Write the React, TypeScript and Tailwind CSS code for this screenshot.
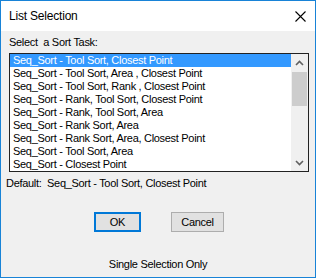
const items = [
  "Seq_Sort - Tool Sort, Closest Point",
  "Seq_Sort - Tool Sort, Area , Closest Point",
  "Seq_Sort - Tool Sort, Rank , Closest Point",
  "Seq_Sort - Rank, Tool Sort, Closest Point",
  "Seq_Sort - Rank, Tool Sort, Area",
  "Seq_Sort - Rank Sort, Area",
  "Seq_Sort - Rank Sort, Area, Closest Point",
  "Seq_Sort - Tool Sort, Area",
  "Seq_Sort - Closest Point",
];

function Chevron({ up }: { up?: boolean }) {
  return (
    <svg width="9" height="6" viewBox="0 0 9 6">
      <polyline
        points={up ? "1,5 4.5,1.5 8,5" : "1,1 4.5,4.5 8,1"}
        fill="none"
        stroke="#606060"
        strokeWidth="1.6"
      />
    </svg>
  );
}

function CloseGlyph() {
  return (
    <svg width="11" height="11" viewBox="0 0 11 11">
      <path d="M0.5 0.5 L10.5 10.5 M10.5 0.5 L0.5 10.5" stroke="#000" strokeWidth="1.1" fill="none" />
    </svg>
  );
}

export default function App() {
  const selected = 0;

  return (
    <div className="w-[316px] h-[278px] border border-[#1883d7] bg-[#f0f0f0] flex flex-col font-['Liberation_Sans',Arial,sans-serif] text-black">
      {/* title bar */}
      <div className="h-[30px] bg-white flex items-center justify-between pl-[8px] pr-[9px]">
        <span className="text-[12px] tracking-[-0.2px]">List Selection</span>
        <CloseGlyph />
      </div>

      <div className="flex flex-col text-[11px] tracking-[-0.3px]">
        <div className="mt-[4px] h-[14px] leading-[14px] pl-[8px] whitespace-pre">Select  a Sort Task:</div>

        {/* list box */}
        <div className="mt-[4px] ml-[8px] w-[300px] h-[119px] border border-[#222] bg-white flex">
          <div className="flex-1 flex flex-col">
            {items.map((item, i) => (
              <div
                key={item}
                className={`h-[13px] leading-[13px] pl-[3px] whitespace-pre ${
                  i === selected ? "bg-[#3399ff] text-white" : ""
                }`}
              >
                {item}
              </div>
            ))}
          </div>
          <div className="w-[17px] bg-[#f0f0f0] flex flex-col">
            <div className="h-[17px] flex items-center justify-center">
              <Chevron up />
            </div>
            <div className="flex-1 px-[1px]">
              <div className="h-[34px] mt-[1px] bg-[#cdcdcd]" />
            </div>
            <div className="h-[17px] flex items-center justify-center">
              <Chevron />
            </div>
          </div>
        </div>

        <div className="mt-[4px] h-[14px] leading-[14px] pl-[5px] whitespace-pre">Default:  Seq_Sort - Tool Sort, Closest Point</div>

        <div className="mt-[22px] flex justify-center gap-[30px] pl-[2px]">
          <button className="w-[47px] h-[20px] border-2 border-[#0078d7] bg-[#e1e1e1] leading-none">
            OK
          </button>
          <button className="w-[53px] h-[20px] border border-[#adadad] bg-[#e1e1e1] leading-none">
            Cancel
          </button>
        </div>

        <div className="mt-[25px] h-[14px] leading-[14px] text-center">Single Selection Only</div>
      </div>
    </div>
  );
}
